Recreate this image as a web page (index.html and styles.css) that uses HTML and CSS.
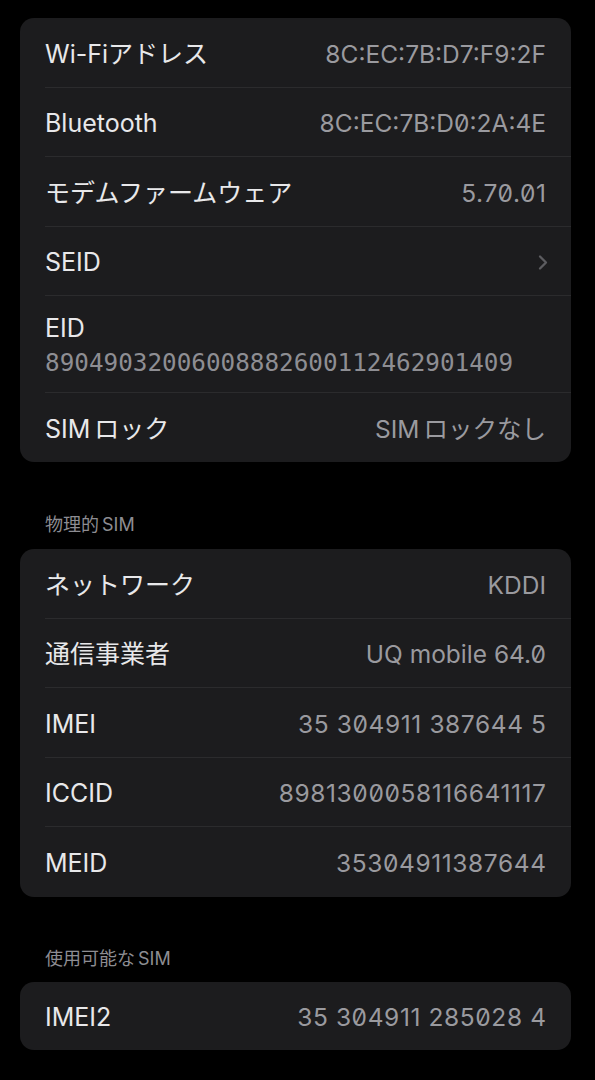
FILE: index.html
```html
<!DOCTYPE html>
<html lang="ja">
<head>
<meta charset="utf-8">
<link rel="stylesheet" href="styles.css">
</head>
<body>
<div class="page">
  <div class="card">
    <div class="row"><span class="label">Wi-Fiアドレス</span><span class="value">8C:EC:7B:D7:F9:2F</span></div>
    <div class="row"><span class="label">Bluetooth</span><span class="value">8C:EC:7B:D0:2A:4E</span></div>
    <div class="row"><span class="label">モデムファームウェア</span><span class="value num">5.70.01</span></div>
    <div class="row"><span class="label">SEID</span><svg class="chev" width="10" height="17" viewBox="0 0 10 17"><path d="M2 2.5 L8 8.5 L2 14.5" fill="none" stroke="#5c5c60" stroke-width="2.3" stroke-linecap="round" stroke-linejoin="round"/></svg></div>
    <div class="row row-tall"><span class="label">EID</span><span class="mono">89049032006008882600112462901409</span></div>
    <div class="row"><span class="label">SIM<span class="gap"></span>ロック</span><span class="value">SIM<span class="gap"></span>ロックなし</span></div>
  </div>

  <div class="section-header">物理的<span class="gap-s"></span>SIM</div>
  <div class="card">
    <div class="row"><span class="label">ネットワーク</span><span class="value">KDDI</span></div>
    <div class="row"><span class="label">通信事業者</span><span class="value">UQ mobile 64.0</span></div>
    <div class="row"><span class="label">IMEI</span><span class="value num">35 304911 387644 5</span></div>
    <div class="row"><span class="label">ICCID</span><span class="value num">8981300058116641117</span></div>
    <div class="row"><span class="label">MEID</span><span class="value num">35304911387644</span></div>
  </div>

  <div class="section-header second">使用可能な<span class="gap-s"></span>SIM</div>
  <div class="card">
    <div class="row single"><span class="label">IMEI2</span><span class="value num">35 304911 285028 4</span></div>
  </div>
</div>
</body>
</html>
```

FILE: styles.css
```css
html, body {
  margin: 0;
  padding: 0;
  background: #000;
}
body {
  font-family: Inter, "Noto Sans CJK JP", sans-serif;
  -webkit-font-smoothing: antialiased;
}
.page {
  padding: 18px 24px 0 20px;
}
.card {
  background: #1c1c1e;
  border-radius: 14px;
  overflow: hidden;
}
.row {
  height: 69.5px;
  box-sizing: border-box;
  margin-left: 25px;
  padding: 3px 25px 0 0;
  display: flex;
  align-items: center;
  justify-content: space-between;
  border-bottom: 1px solid #2b2b2d;
}
.row:last-child {
  border-bottom: none;
}
.row.single {
  height: 68px;
}
.row-tall {
  height: 96.5px;
  flex-direction: column;
  align-items: flex-start;
  justify-content: center;
  gap: 5px;
}
.label {
  color: #e8e8ea;
  font-size: 25px;
  line-height: 30px;
}
.value {
  color: #9a9a9f;
  font-size: 24.5px;
  line-height: 30px;
  font-feature-settings: "zero";
}
.value.num {
  letter-spacing: 0.6px;
  margin-right: -0.6px;
}
.gap {
  display: inline-block;
  width: 4px;
}
.gap-s {
  display: inline-block;
  width: 3px;
}
.mono {
  color: #8e8e93;
  font-family: "DejaVu Sans Mono", monospace;
  font-size: 24.3px;
  line-height: 30px;
}
.chev {
  margin-right: -2px;
}
.section-header {
  color: #8d8d92;
  font-size: 18px;
  line-height: 22px;
  margin: 52px 0 13px 25px;
}
.section-header.second {
  margin-top: 51px;
  margin-bottom: 12px;
}
```
